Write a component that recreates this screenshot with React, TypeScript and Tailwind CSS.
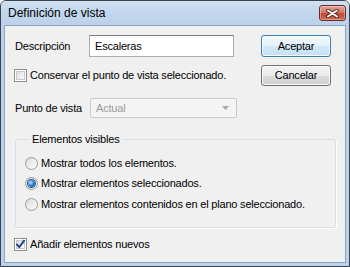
import React from "react";

function CheckBox({ checked }: { checked?: boolean }) {
  return (
    <div className="w-[13px] h-[13px] shrink-0 border border-[#8e8f8f] bg-white p-[1px] -ml-[1px]">
      <div className="relative w-full h-full border border-[#c6c8cb] bg-[linear-gradient(135deg,#d8dadd_0%,#eeeeef_55%,#fafafa_100%)]">
        {checked && (
          <svg className="absolute -left-[2px] -top-[2px]" width="11" height="11" viewBox="0 0 11 11">
            <path d="M2 5.5 L4.3 8 L9 1.8" fill="none" stroke="#1c3a8c" strokeWidth="1.8" strokeLinecap="square" />
          </svg>
        )}
      </div>
    </div>
  );
}

function Radio({ checked }: { checked?: boolean }) {
  return (
    <div className="w-[13px] h-[13px] shrink-0 rounded-full border border-[#9a9c9e] bg-[linear-gradient(135deg,#d6d8da_0%,#eceded_50%,#fbfbfb_100%)] flex items-center justify-center">
      {checked && (
        <div className="w-[7px] h-[7px] rounded-full bg-[radial-gradient(circle_at_35%_35%,#b9e3ff_0%,#3b8ad8_45%,#0b3f8f_100%)] shadow-[0_0_0_1px_#28548f]" />
      )}
    </div>
  );
}

function CloseBtn() {
  return (
    <div className="w-[27px] h-[16px] mt-[4px] rounded-[3px] border border-[#6e2a22] bg-[linear-gradient(to_bottom,#e3a295_0%,#d27a6a_45%,#c14a35_55%,#cb6a50_100%)] flex items-center justify-center shadow-[inset_0_0_0_1px_rgba(255,255,255,0.35)]">
      <svg width="13" height="9" viewBox="0 0 13 9">
        <path d="M2 1.5 L11 7.5 M11 1.5 L2 7.5" stroke="#4a1c16" strokeWidth="3.6" strokeLinecap="round" />
        <path d="M2 1.5 L11 7.5 M11 1.5 L2 7.5" stroke="#ffffff" strokeWidth="2" strokeLinecap="round" />
      </svg>
    </div>
  );
}

export default function App() {
  return (
    <div className="w-[350px] h-[267px] bg-white font-['Liberation_Sans',Arial,sans-serif] text-[11px] text-black">
      <div className="w-full h-full flex flex-col border border-[#3b4250] rounded-t-[6px] bg-[#bcd2ea] overflow-hidden">
        <div className="h-[24px] shrink-0 flex items-start justify-between pl-[7px] pr-[3px] bg-[linear-gradient(to_bottom,#d0e0f2_0%,#c1d6ed_50%,#bcd2ea_100%)]">
          <span className="text-[12px] leading-[24px]">Definición de vista</span>
          <CloseBtn />
        </div>
        <div className="flex-1 mx-[3px] mb-[3px] border border-[#8fa6c3] bg-[#f0f0f0] pl-[10px] pt-[9px] flex flex-col tracking-[-0.2px]">
          {/* Row 1 */}
          <div className="flex items-center h-[22px]">
            <div className="w-[74px]">Descripción</div>
            <div className="w-[145px] h-[22px] border border-[#abadb3] border-t-[#7a7d85] bg-white flex items-center pl-[5px]">
              Escaleras
            </div>
            <div className="ml-[27px] w-[70px] h-[22px] rounded-[3px] border border-[#3c7fb1] bg-[linear-gradient(to_bottom,#f1f8fd_0%,#e3f1fa_50%,#d2e8f6_50%,#c6e0f2_100%)] shadow-[inset_0_0_0_1px_#f6fbfe] flex items-center justify-center">
              Aceptar
            </div>
          </div>
          {/* Row 2 */}
          <div className="flex items-center h-[21px] mt-[8px]">
            <div className="w-[246px] flex items-center">
              <CheckBox />
              <span className="ml-[3px]">Conservar el punto de vista seleccionado.</span>
            </div>
            <div className="w-[70px] h-[21px] rounded-[3px] border border-[#707070] bg-[linear-gradient(to_bottom,#f2f2f2_0%,#ebebeb_50%,#dddddd_50%,#cfcfcf_100%)] shadow-[inset_0_0_0_1px_#fbfbfb] flex items-center justify-center">
              Cancelar
            </div>
          </div>
          {/* Row 3 */}
          <div className="flex items-center h-[20px] mt-[12px]">
            <div className="w-[75px]">Punto de vista</div>
            <div className="w-[147px] h-[20px] rounded-[2px] border border-[#c7cbcf] bg-[#f4f4f4] flex items-center justify-between pl-[5px] pr-[7px] text-[#9b9b9b]">
              <span>Actual</span>
              <svg width="7" height="4" viewBox="0 0 7 4">
                <path d="M0 0 H7 L3.5 4 Z" fill="#a8a8a8" />
              </svg>
            </div>
          </div>
          {/* Group */}
          <fieldset className="mt-[15px] w-[321px] border border-[#d5dfe5] rounded-[3px] shadow-[1px_1px_0_#ffffff] pl-[9px] pt-[7px] pb-[13px]">
            <legend className="ml-[5px] px-[2px] leading-[13px]">Elementos visibles</legend>
            <div className="flex flex-col">
              <div className="flex items-center h-[20px]">
                <Radio />
                <span className="ml-[3px]">Mostrar todos los elementos.</span>
              </div>
              <div className="flex items-center h-[20px]">
                <Radio checked />
                <span className="ml-[3px]">Mostrar elementos seleccionados.</span>
              </div>
              <div className="flex items-center h-[21px] pt-[1px]">
                <Radio />
                <span className="ml-[3px]">Mostrar elementos contenidos en el plano seleccionado.</span>
              </div>
            </div>
          </fieldset>
          {/* Final checkbox */}
          <div className="flex items-center h-[16px] mt-[8px]">
            <CheckBox checked />
            <span className="ml-[3px]">Añadir elementos nuevos</span>
          </div>
        </div>
      </div>
    </div>
  );
}
